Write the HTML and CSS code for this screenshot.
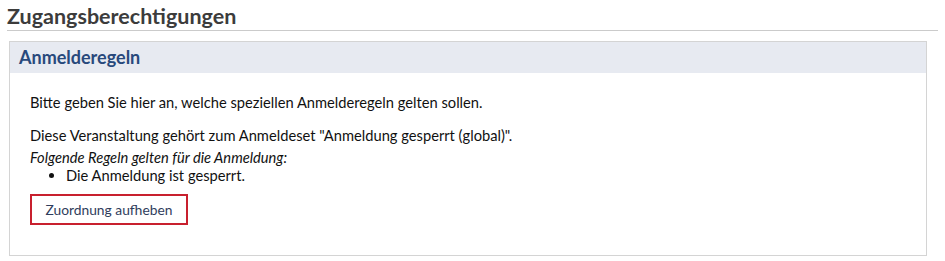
FILE: index.html
```html
<!DOCTYPE html>
<html lang="de">
<head>
<meta charset="utf-8">
<title>Zugangsberechtigungen</title>
<link rel="stylesheet" href="styles.css">
</head>
<body>
<section class="page">
  <h1 class="title">Zugangsberechtigungen</h1>
  <div class="panel">
    <div class="panel-head">Anmelderegeln</div>
    <div class="panel-body">
      <p class="intro">Bitte geben Sie hier an, welche speziellen Anmelderegeln gelten sollen.</p>
      <p class="info">Diese Veranstaltung gehört zum Anmeldeset "Anmeldung gesperrt (global)".<br><em>Folgende Regeln gelten für die Anmeldung:</em></p>
      <ul class="rules">
        <li>Die Anmeldung ist gesperrt.</li>
      </ul>
      <a class="btn" href="#">Zuordnung aufheben</a>
    </div>
  </div>
</section>
</body>
</html>
```
FILE: styles.css
```css
html, body {
  margin: 0;
  padding: 0;
  background: #fff;
}
body {
  font-family: Lato, "Liberation Sans", sans-serif;
  color: #111;
  font-size: 14.7px;
}
.page {
  padding: 5px 7px 0 7px;
}
.title {
  margin: 0;
  font-size: 21.5px;
  font-weight: bold;
  color: #3c3c3c;
  line-height: 23px;
  padding: 0 0 2px 0;
  border-bottom: 1px solid #cbcbcb;
}
.panel {
  margin: 10px 11px 0 2px;
  border: 1px solid #d4d4d4;
}
.panel-head {
  background: #e7eaf1;
  color: #28497c;
  font-weight: bold;
  font-size: 18px;
  line-height: 31px;
  padding: 0 9px;
}
.panel-body {
  padding: 18px 20px 30px 20px;
}
.panel-body p {
  margin: 0;
  line-height: 22px;
}
.intro {
  margin-bottom: 11px !important;
}
.rules {
  margin: -3px 0 0 0;
  padding-left: 36px;
  line-height: 20px;
}
.btn {
  display: block;
  width: max-content;
  margin-top: 9px;
  border: 2px solid #c8202e;
  color: #2f3d5c;
  text-decoration: none;
  font-size: 13.8px;
  padding: 0 13.5px;
  line-height: 27px;
  white-space: nowrap;
}
```
